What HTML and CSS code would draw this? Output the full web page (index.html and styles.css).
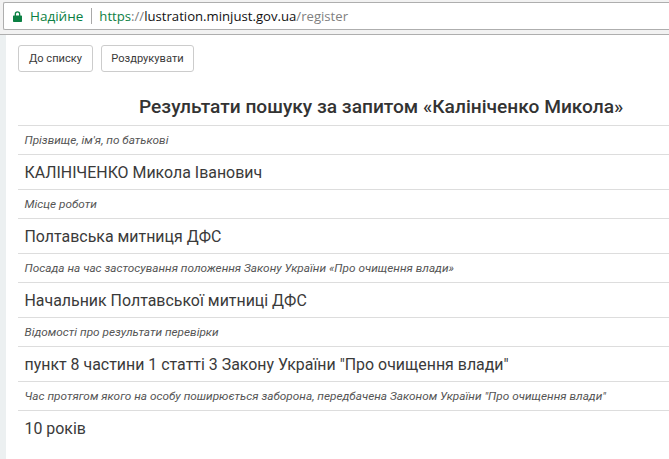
FILE: index.html
```html
<!DOCTYPE html>
<html lang="uk">
<head>
<meta charset="utf-8">
<title>Результати пошуку</title>
<link rel="stylesheet" href="styles.css">
</head>
<body>
<header class="chrome">
  <div class="omnibox">
    <svg class="lock" width="9" height="11" viewBox="0 0 9 11"><path d="M1.7 4.5V3a2.8 2.8 0 0 1 5.6 0v1.5h1a.7.7 0 0 1 .7.7v5a.7.7 0 0 1-.7.7H.7a.7.7 0 0 1-.7-.7v-5a.7.7 0 0 1 .7-.7zm1.3 0h3V3a1.5 1.5 0 0 0-3 0z" fill="#0b8043"/></svg>
    <span class="secure">Надійне</span>
    <span class="sep"></span>
    <span class="url"><span class="scheme">https</span><span class="dim">://</span><span class="host">lustration.minjust.gov.ua</span><span class="dim">/register</span></span>
  </div>
</header>
<div class="page">
  <aside class="rail"></aside>
  <main class="content">
    <div class="actions">
      <button class="btn btn-a">До списку</button>
      <button class="btn btn-b">Роздрукувати</button>
    </div>
    <h1 class="title">Результати пошуку за запитом «Калініченко Микола»</h1>
    <div class="row label">Прізвище, ім'я, по батькові</div>
    <div class="row value">КАЛІНІЧЕНКО Микола Іванович</div>
    <div class="row label">Місце роботи</div>
    <div class="row value">Полтавська митниця ДФС</div>
    <div class="row label">Посада на час застосування положення Закону України «Про очищення влади»</div>
    <div class="row value">Начальник Полтавської митниці ДФС</div>
    <div class="row label">Відомості про результати перевірки</div>
    <div class="row value">пункт 8 частини 1 статті 3 Закону України "Про очищення влади"</div>
    <div class="row label">Час протягом якого на особу поширюється заборона, передбачена Законом України "Про очищення влади"</div>
    <div class="row value">10 років</div>
  </main>
</div>
</body>
</html>
```
FILE: styles.css
```css
* { box-sizing: border-box; }
html, body { margin: 0; height: 100%; overflow: hidden; background: #fff; }
body { font-family: Roboto, "Liberation Sans", sans-serif; color: #333; display: flex; flex-direction: column; }
.chrome { height: 35px; flex: none; background: #f2f2f2; border-bottom: 1px solid #aeaeae; padding: 2px 0 4px 3px; }
.omnibox { height: 28px; background: #fff; border: 1px solid #aeaeae; border-right: none; border-radius: 2px 0 0 2px; display: flex; align-items: center; padding-left: 9px; font-family: "Open Sans", "Liberation Sans", sans-serif; white-space: nowrap; }
.lock { flex: none; }
.secure { color: #0b8043; margin-left: 8px; font-size: 13.5px; }
.sep { width: 1px; height: 16px; background: #a9a9a9; margin: 0 7px 0 8px; }
.url { color: #222; font-size: 13.15px; }
.scheme { color: #0b8043; }
.dim { color: #808080; }
.host { color: #111; }
.page { flex: 1; display: flex; min-height: 0; }
.rail { width: 6px; flex: none; background: #ecf0f1; }
.content { flex: 1; min-width: 0; padding: 10px 0 0 12px; }
.actions { display: flex; gap: 8px; }
.btn { height: 27px; padding: 0; background: #fff; border: 1px solid #ccc; border-radius: 3px; font-family: Roboto, "Liberation Sans", sans-serif; font-size: 11.1px; color: #3a3a3a; }
.btn-a { width: 75px; }
.btn-b { width: 93px; }
.title { margin: 0; height: 53px; padding: 24px 0 0 121px; font-size: 19.15px; line-height: 21px; font-weight: 500; color: #333; white-space: nowrap; }
.row { border-top: 1px solid #ddd; white-space: nowrap; padding-left: 6.5px; display: flex; align-items: center; }
.label { height: 29px; font-size: 11.8px; font-style: italic; color: #555; }
.value { height: 35px; font-size: 15.93px; color: #3a3a3a; }
```
